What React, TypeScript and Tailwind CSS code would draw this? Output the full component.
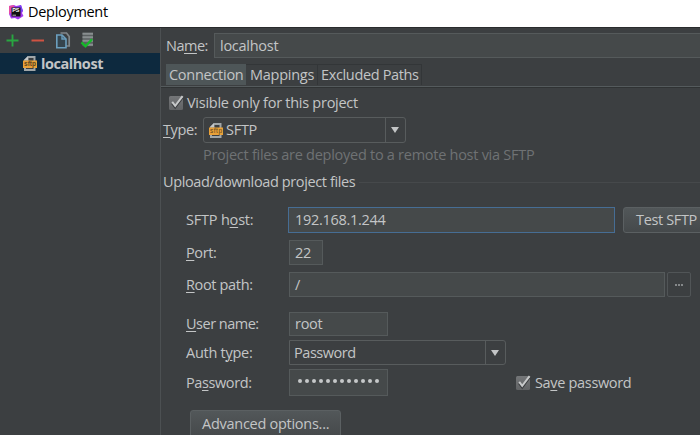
import React from 'react';

const font = "font-['Open_Sans','Noto_Sans',sans-serif]";

function Label({ children, className = '', tracking = 'tracking-[-0.27px]' }: { children: React.ReactNode; className?: string; tracking?: string }) {
  return <span className={`block whitespace-nowrap ${tracking} ${className}`}>{children}</span>;
}

function U({ children }: { children: React.ReactNode }) {
  return <span className="underline decoration-1 underline-offset-2">{children}</span>;
}

function SftpIcon({ className = '' }: { className?: string }) {
  return (
    <svg width="14" height="15" viewBox="0 0 14 15" className={`shrink-0 ${className}`}>
      <path d="M5 0H12.5V15H1V4Z" fill="#a0a6a8" />
      <path d="M5.5 2H10.5V13H3V5H5.5Z" fill="#3c3f41" />
      <path d="M1 4L5 0V4Z" fill="#c4c8c9" />
      <rect x="0" y="4.5" width="14" height="7.5" fill="#e9a139" />
      <text x="1" y="10.3" fontSize="6.5" textLength="12" fill="#5a4520" fontFamily="Liberation Sans, sans-serif">sftp</text>
    </svg>
  );
}

function Checkbox() {
  return (
    <svg width="16" height="16" viewBox="0 0 16 16" className="shrink-0">
      <defs>
        <linearGradient id="check-bg" x1="0" y1="0" x2="0" y2="1">
          <stop stopColor="#747678" />
          <stop offset="1" stopColor="#616365" />
        </linearGradient>
      </defs>
      <rect x="0" y="1" width="14" height="14" rx="1.5" fill="url(#check-bg)" />
      <path d="M3.2 8.2L6.2 12.2L13.4 2.6" fill="none" stroke="#3a3c3e" strokeWidth="2.4" />
      <path d="M3.2 6.8L6.2 10.8L13.6 1.2" fill="none" stroke="#c6c8c9" strokeWidth="2" />
    </svg>
  );
}

function Arrow() {
  return (
    <span className="flex h-full w-5 shrink-0 items-center justify-center border-l border-[#585c5d] pr-px">
      <svg width="8" height="6" viewBox="0 0 8 6">
        <path d="M0 0H8L4 6Z" fill="#c3c5c6" />
      </svg>
    </span>
  );
}

function Toolbar() {
  return (
    <div className="flex h-[25px] items-center pl-[6px]">
      <svg width="90" height="18" viewBox="0 0 90 18">
        <path d="M0.5 8.5H12.5M6.5 2.5V14.5" stroke="#28a641" strokeWidth="1.9" />
        <path d="M25.5 8.5H38" stroke="#cf5342" strokeWidth="2" />
        <path d="M54.5 1H60.5L63.2 4.5V14H60" fill="none" stroke="#81878a" strokeWidth="1.7" />
        <path d="M50.8 3H56L60 7V15.8H50.8Z" fill="#35444d" stroke="#6b9fbe" strokeWidth="1.6" />
        <path d="M56 3V7H60" fill="none" stroke="#6b9fbe" strokeWidth="1.4" />
        <rect x="76.5" y="0.7" width="10.5" height="13.5" fill="#5b6062" />
        <path d="M76.5 1.8H87M76.5 5.3H87M76.5 8.8H87M81 12.8H87" stroke="#898e90" strokeWidth="2" />
        <path d="M75.5 10.3L79.5 14.3L86 7.3" fill="none" stroke="#16b829" strokeWidth="2.4" />
      </svg>
    </div>
  );
}

export default function App() {
  return (
    <div className={`flex h-[435px] w-[700px] flex-col overflow-hidden bg-[#3c3f41] text-[14.5px] leading-5 text-[#c3c5c6] ${font}`}>
      <header className="flex h-[27px] shrink-0 items-center bg-white pb-[4px] pl-[8px] text-black">
        <svg width="16" height="16" viewBox="0 0 16 16" className="shrink-0">
          <path d="M1 2L6 1L8 2L13 1L15 7L14 9L15.5 12L10 15.5L7 14L3 14.5L1 10Z" fill="#a43af0" />
          <path d="M1 2L6 1L5 8L1 10Z" fill="#e64ca5" />
          <path d="M9 3L13 1L15 7L12 9Z" fill="#7b42f6" />
          <rect x="3.5" y="3.5" width="9" height="9" fill="#111" />
          <text x="4.2" y="8.4" fontSize="5.5" fontWeight="bold" fill="#fff" fontFamily="Liberation Sans, sans-serif">PS</text>
          <path d="M4.5 11.2H8" stroke="#ddd" strokeWidth="0.8" />
        </svg>
        <Label className="ml-[4px]" tracking="tracking-[-0.3px]">Deployment</Label>
      </header>
      <div className="flex h-[408px] shrink-0 border-t border-[#292b2d]">
        <aside className="w-[161px] shrink-0 border-r border-[#4c5052]">
          <Toolbar />
          <div className="flex h-[21px] items-center bg-[#0d293e] pl-[23px] font-bold">
            <SftpIcon />
            <Label className="ml-[4px]" tracking="tracking-[-0.45px]">localhost</Label>
          </div>
        </aside>
        <main className="flex w-[539px] shrink-0 flex-col overflow-hidden">
          <div className="mt-[5px] flex h-[25px] shrink-0 items-center pl-[5px]">
            <Label className="w-[48px]" tracking="tracking-[-0.5px]">Na<U>m</U>e:</Label>
            <div className="flex h-[25px] flex-1 items-center border border-r-0 border-[#555a5b] bg-[#45494a] pl-[5px]"><Label>localhost</Label></div>
          </div>
          <div className="mt-[6px] flex h-[23px] shrink-0 border-b border-[#555b5d] pl-[5px]">
            <div className="flex h-[21px] w-[80px] items-center bg-[#4e5658] pl-[3px]"><Label>Connection</Label></div>
            <div className="flex h-[21px] w-[72px] items-center border-r border-t border-[#333638] pl-[4px]"><Label>Mappings</Label></div>
            <div className="flex h-[21px] w-[104px] items-center border-r border-t border-[#333638] pl-[3px]"><Label tracking="tracking-[-0.35px]">Excluded Paths</Label></div>
          </div>
          <div className="flex h-[30px] shrink-0 items-center gap-[2px] border-t border-[#303334] pl-[8px]">
            <Checkbox />
            <Label>Visible only for this project</Label>
          </div>
          <div className="flex h-[26px] shrink-0 items-center pl-[2px]">
            <Label className="w-[40px]" tracking="tracking-[-0.4px]"><U>T</U>ype:</Label>
            <div className="flex h-[26px] w-[203px] items-center rounded-[3px] border border-[#585c5d] pl-[5px]">
              <SftpIcon />
              <Label className="ml-[3px] flex-1">SFTP</Label>
              <Arrow />
            </div>
          </div>
          <div className="mt-[2px] flex h-5 shrink-0 items-center pl-[42px] text-[#6f7274]"><Label>Project files are deployed to a remote host via SFTP</Label></div>
          <div className="mt-[7px] flex h-5 shrink-0 items-center pl-[2px]">
            <Label className="w-[196px]" tracking="tracking-[-0.38px]">Upload/download project files</Label>
            <div className="h-px flex-1 bg-[#46494b]" />
          </div>
          <div className="mt-[15px] flex h-[26px] shrink-0 items-center pl-[25px]">
            <Label className="w-[102px] shrink-0" tracking="tracking-[-0.2px]">SFTP h<U>o</U>st:</Label>
            <div className="flex h-[26px] w-[327px] shrink-0 items-center border border-[#466d94] bg-[#45494a] pl-[6px]"><Label tracking="tracking-[-0.3px]">192.168.1.244</Label></div>
            <div className="ml-[8px] flex h-[26px] w-[100px] shrink-0 items-center rounded-[3px] border border-[#5b6062] bg-linear-to-b from-[#525759] to-[#45494b] pl-[12px]"><Label tracking="tracking-[-0.35px]">Test SFTP</Label></div>
          </div>
          <div className="mt-[7px] flex h-[25px] shrink-0 items-center pl-[25px]">
            <Label className="w-[103px]" tracking="tracking-[-0.4px]"><U>P</U>ort:</Label>
            <div className="flex h-[25px] w-[34px] items-center border border-[#555a5b] bg-[#45494a] pl-[5px]"><Label>22</Label></div>
          </div>
          <div className="mt-[7px] flex h-[25px] shrink-0 items-center pl-[25px]">
            <Label className="w-[103px]" tracking="tracking-[-0.35px]"><U>R</U>oot path:</Label>
            <div className="flex h-[25px] w-[376px] items-center border border-[#555a5b] bg-[#45494a] pl-[5px]"><Label>/</Label></div>
            <div className="ml-[2px] flex h-[25px] w-[24px] items-center justify-center rounded-[2px] border border-[#515557]">
              <span className="flex gap-px"><i className="size-[2px] bg-[#85888a]" /><i className="size-[2px] bg-[#85888a]" /><i className="size-[2px] bg-[#85888a]" /></span>
            </div>
          </div>
          <div className="mt-[15px] flex h-6 shrink-0 items-center pl-[25px]">
            <Label className="w-[103px]" tracking="tracking-[-0.5px]"><U>U</U>ser name:</Label>
            <div className="flex h-6 w-[99px] items-center border border-[#555a5b] bg-[#45494a] pl-[5px]"><Label>root</Label></div>
          </div>
          <div className="mt-[4px] flex h-[25px] shrink-0 items-center pl-[25px]">
            <Label className="w-[103px]">Auth t<U>y</U>pe:</Label>
            <div className="flex h-[25px] w-[217px] items-center rounded-r-[3px] border border-[#585c5d] pl-[4px]"><Label className="flex-1" tracking="tracking-[-0.45px]">Password</Label><Arrow /></div>
          </div>
          <div className="mt-[4px] flex h-[27px] shrink-0 items-center pl-[25px]">
            <Label className="w-[103px]" tracking="tracking-[-0.4px]">Pa<U>s</U>sword:</Label>
            <div className="flex h-[27px] w-[99px] items-center gap-[3px] border border-[#555a5b] bg-[#45494a] pb-[3px] pl-[8px]">
              {Array.from({ length: 12 }, (_, i) => <i key={i} className="size-[4px] shrink-0 rounded-full bg-[#c6c8c9]" />)}
            </div>
            <div className="ml-[128px] flex items-center gap-[3px]"><Checkbox /><Label tracking="tracking-[-0.33px]">Sa<U>v</U>e password</Label></div>
          </div>
          <div className="ml-[29px] mt-[14px] flex h-[28px] w-[151px] shrink-0 items-center rounded-[3px] border border-[#5b6062] bg-linear-to-b from-[#525759] to-[#45494b] pl-[11px]"><Label>Advanced options...</Label></div>
        </main>
      </div>
    </div>
  );
}
